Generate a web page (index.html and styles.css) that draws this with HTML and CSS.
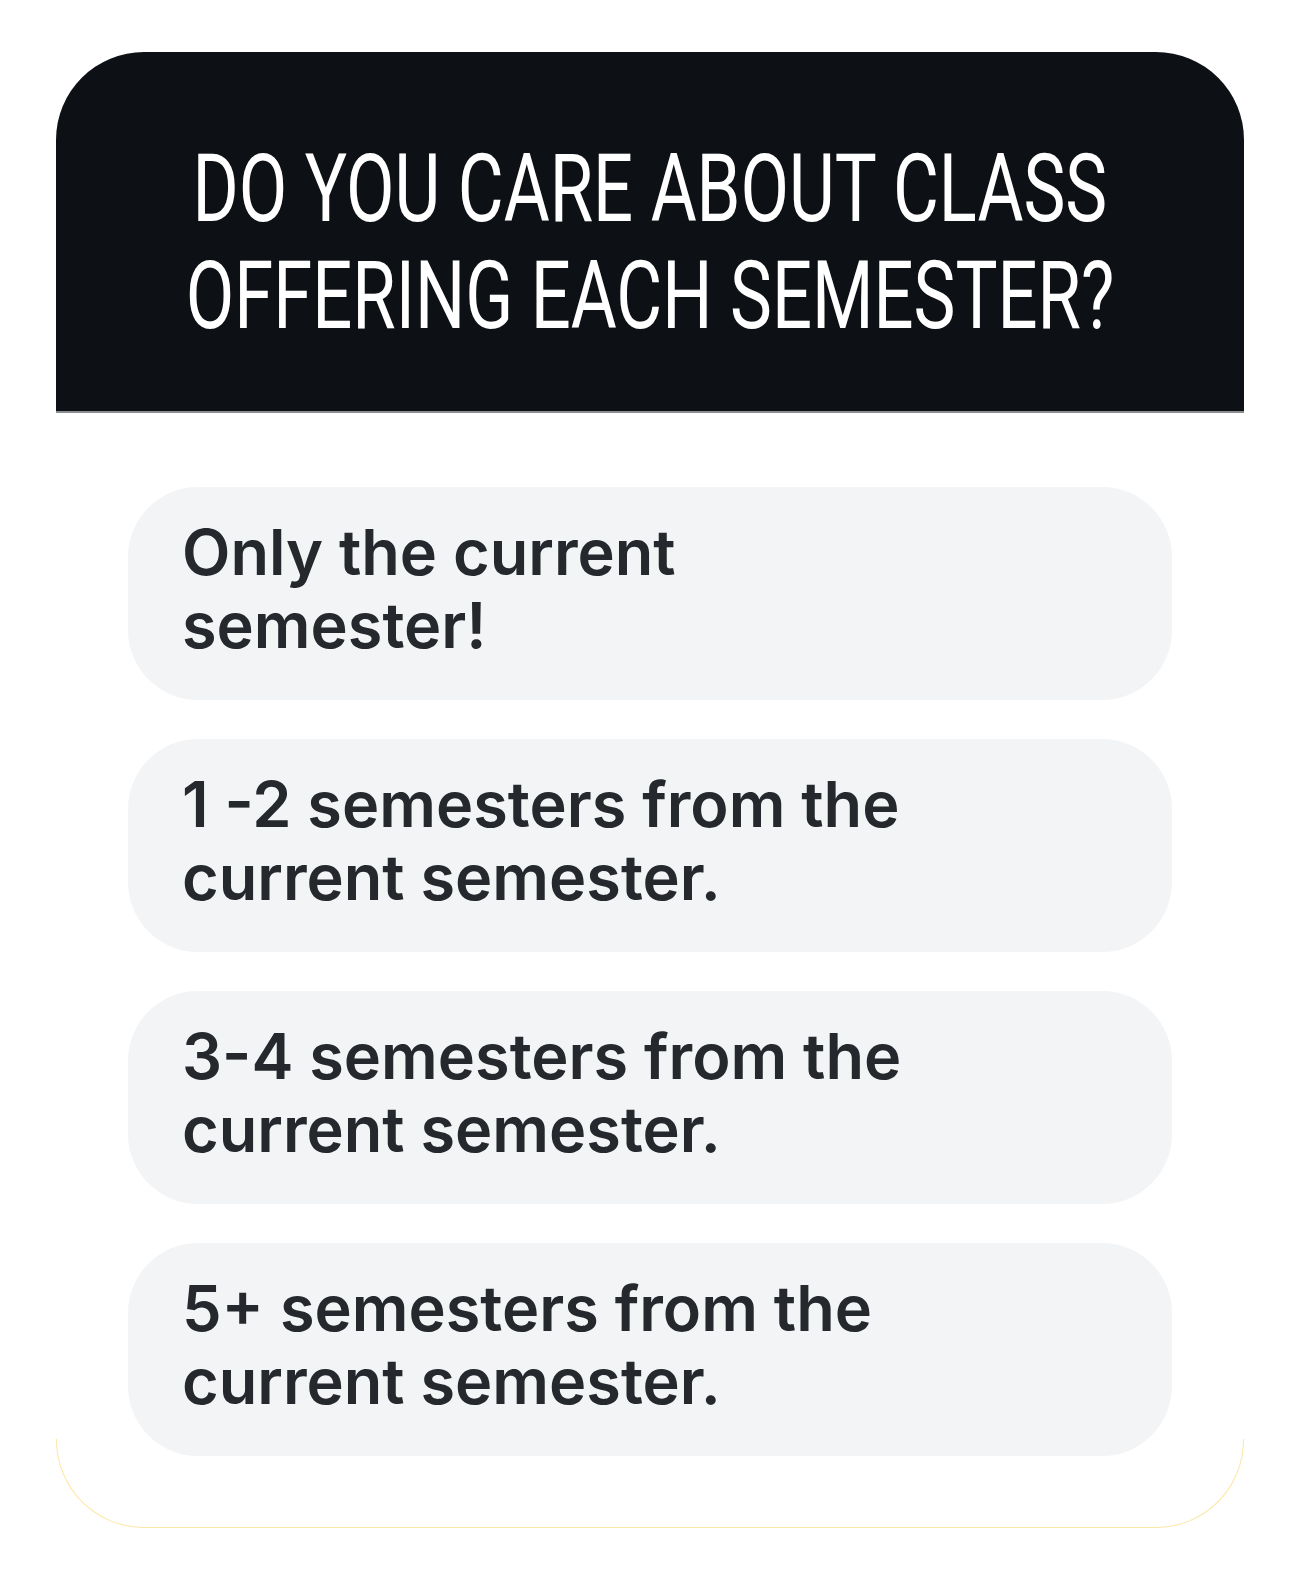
FILE: index.html
```html
<!DOCTYPE html>
<html lang="en">
<head>
<meta charset="utf-8">
<title>Poll</title>
<link rel="stylesheet" href="styles.css">
</head>
<body>
<div class="card">
  <div class="header">
    <h1 class="question"><span class="line">DO YOU CARE ABOUT CLASS</span><span class="line">OFFERING EACH SEMESTER?</span></h1>
  </div>
  <div class="body">
    <div class="option">Only the current<br>semester!</div>
    <div class="option">1 -2 semesters from the<br>current semester.</div>
    <div class="option">3-4 semesters from the<br>current semester.</div>
    <div class="option">5+ semesters from the<br>current semester.</div>
  </div>
</div>
</body>
</html>
```
FILE: styles.css
```css
html, body {
  margin: 0;
  padding: 0;
  background: #ffffff;
}
body {
  padding-top: 52px;
  padding-left: 56px;
}
.card {
  width: 1188px;
  border-radius: 88px;
  position: relative;
  background: #ffffff;
}
.header {
  background: #0d1014;
  border-radius: 88px 88px 0 0;
  padding: 84px 0 0;
  height: 361px;
  box-sizing: border-box;
  border-bottom: 2px solid #8c8d91;
}
.question {
  margin: 0;
  font-family: Roboto, "Liberation Sans", sans-serif;
  font-weight: 400;
  font-size: 94px;
  line-height: 107px;
  color: #ffffff;
  text-align: center;
  display: flex;
  flex-direction: column;
  align-items: center;
}
.line {
  display: block;
  white-space: nowrap;
  transform: scaleX(0.75);
  transform-origin: center;
}
.body {
  padding: 74px 72px 72px;
  display: flex;
  flex-direction: column;
  gap: 39px;
  position: relative;
}
.body::after {
  content: "";
  position: absolute;
  left: 0;
  right: 0;
  bottom: 0;
  height: 88px;
  border: 1px solid #fde6a6;
  border-top: none;
  border-radius: 0 0 88px 88px;
  pointer-events: none;
}
.option {
  background: #f3f4f6;
  border-radius: 70px;
  height: 213px;
  box-sizing: border-box;
  padding: 29px 52px 0 54px;
  font-family: Inter, Roboto, "Liberation Sans", sans-serif;
  font-weight: 600;
  font-size: 63px;
  line-height: 73px;
  color: #25282d;
}
```
